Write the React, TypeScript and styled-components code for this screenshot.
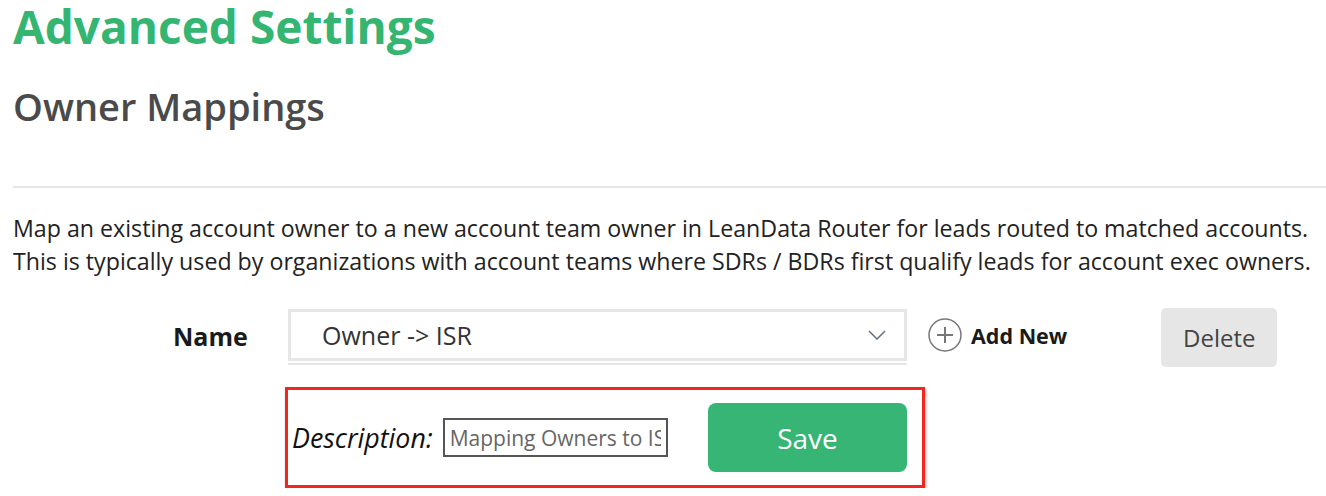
import React from 'react';
import styled, { createGlobalStyle } from 'styled-components';

const GlobalStyle = createGlobalStyle`
  body {
    margin: 0;
    background: #fff;
    font-family: "Open Sans", "Liberation Sans", sans-serif;
  }
`;

const Page = styled.div`
  padding: 0 0 0 13px;
  width: 1313px;
  overflow: hidden;
`;

const Title = styled.h1`
  margin: 0;
  padding-bottom: 8px;
  font-size: 46px;
  line-height: 52px;
  font-weight: 700;
  color: #35b572;
`;

const SubTitle = styled.h2`
  margin: 27px 0 0;
  font-size: 38px;
  line-height: 38px;
  font-weight: 600;
  color: #4a4a4a;
`;

const Divider = styled.hr`
  margin: 61px 0 0;
  border: none;
  border-top: 2px solid #e6e6e6;
`;

const Intro = styled.p`
  margin: 24px 0 0;
  font-size: 23.2px;
  line-height: 33px;
  color: #222;
  white-space: nowrap;
`;

const FormRow = styled.div`
  display: flex;
  align-items: center;
  margin-top: 30px;
  padding-left: 160px;
`;

const Label = styled.span`
  width: 115px;
  margin-top: -3px;
  font-size: 25px;
  font-weight: 700;
  color: #1a1a1a;
`;

const Select = styled.div`
  box-sizing: border-box;
  width: 619px;
  height: 52px;
  margin-top: -5px;
  border: 3px solid #e6e6e6;
  box-shadow: 0 2px 0 #fff, 0 4px 0 #e6e6e6;
  display: flex;
  align-items: center;
  justify-content: space-between;
  padding: 0 18px 0 31px;
  font-size: 25px;
  color: #333;
`;

const AddNew = styled.button`
  display: flex;
  align-items: center;
  gap: 9px;
  margin-left: 21px;
  margin-top: -5px;
  padding: 0;
  border: none;
  background: none;
  font-family: inherit;
  font-size: 21.5px;
  font-weight: 700;
  color: #1a1a1a;
`;

const GreyButton = styled.button`
  margin-left: 94px;
  width: 116px;
  height: 59px;
  border: none;
  border-radius: 5px;
  background: #e6e6e6;
  font-family: inherit;
  font-size: 24px;
  color: #444;
`;

const Highlight = styled.div`
  box-sizing: border-box;
  display: flex;
  align-items: center;
  width: 640px;
  height: 101px;
  margin: 20px 0 0 272px;
  padding: 0 15px 0 4px;
  border: 3px solid #f0271f;
  box-shadow: 1px 2px 3px rgba(0, 0, 0, 0.3);
`;

const DescLabel = styled.span`
  font-size: 26.8px;
  font-style: italic;
  font-weight: 400;
  color: #111;
`;

const DescInput = styled.input`
  box-sizing: border-box;
  width: 225px;
  height: 39px;
  margin-left: 10px;
  padding: 0 5px;
  border: 2px solid #555;
  font-family: inherit;
  font-size: 21px;
  color: #666;
  outline: none;
`;

const SaveButton = styled.button`
  margin-left: auto;
  width: 199px;
  height: 69px;
  border: none;
  border-radius: 8px;
  background: #36b574;
  font-family: inherit;
  font-size: 28px;
  color: #fff;
`;

function Chevron() {
  return (
    <svg width="18" height="10" viewBox="0 0 18 10" fill="none">
      <path d="M1 1l8 8 8-8" stroke="#607080" strokeWidth="1.5" />
    </svg>
  );
}

function PlusCircle() {
  return (
    <svg width="34" height="34" viewBox="0 0 34 34" fill="none">
      <circle cx="17" cy="17" r="16" stroke="#777" strokeWidth="1.5" />
      <path d="M17 9v16M9 17h16" stroke="#777" strokeWidth="2" />
    </svg>
  );
}

export default function App() {
  return (
    <Page>
      <GlobalStyle />
      <Title>Advanced Settings</Title>
      <SubTitle>Owner Mappings</SubTitle>
      <Divider />
      <Intro>
        Map an existing account owner to a new account team owner in LeanData Router for leads routed to matched accounts.
        <br />
        This is typically used by organizations with account teams where SDRs / BDRs first qualify leads for account exec owners.
      </Intro>
      <FormRow>
        <Label>Name</Label>
        <Select>
          <span>Owner -&gt; ISR</span>
          <Chevron />
        </Select>
        <AddNew>
          <PlusCircle />
          Add New
        </AddNew>
        <GreyButton>Delete</GreyButton>
      </FormRow>
      <Highlight>
        <DescLabel>Description:</DescLabel>
        <DescInput defaultValue="Mapping Owners to ISR" />
        <SaveButton>Save</SaveButton>
      </Highlight>
    </Page>
  );
}
